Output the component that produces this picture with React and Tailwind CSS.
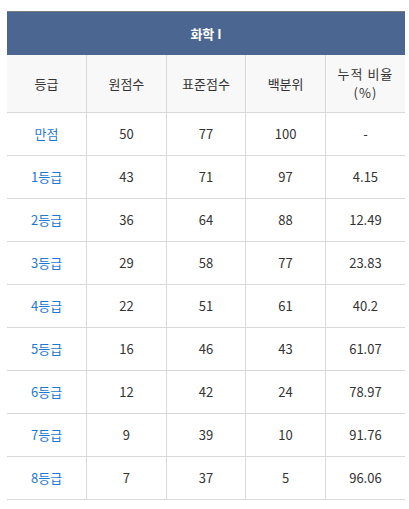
import React from "react";

const rows = [
  { grade: "만점", raw: "50", std: "77", pct: "100", cum: "-" },
  { grade: "1등급", raw: "43", std: "71", pct: "97", cum: "4.15" },
  { grade: "2등급", raw: "36", std: "64", pct: "88", cum: "12.49" },
  { grade: "3등급", raw: "29", std: "58", pct: "77", cum: "23.83" },
  { grade: "4등급", raw: "22", std: "51", pct: "61", cum: "40.2" },
  { grade: "5등급", raw: "16", std: "46", pct: "43", cum: "61.07" },
  { grade: "6등급", raw: "12", std: "42", pct: "24", cum: "78.97" },
  { grade: "7등급", raw: "9", std: "39", pct: "10", cum: "91.76" },
  { grade: "8등급", raw: "7", std: "37", pct: "5", cum: "96.06" },
];

const cell = "border-b border-r border-[#d9d9d9] last:border-r-0 text-center align-middle";

const App = () => {
  return (
    <div
      className="min-h-screen bg-white pl-[7px] pt-[11px] text-[13px] text-[#333]"
      style={{ fontFamily: '"Noto Sans CJK KR", "Noto Sans", sans-serif' }}
    >
      <table className="w-[398px] table-fixed border-collapse">
        <thead>
          <tr>
            <th
              colSpan={5}
              className="h-[43px] border-t border-[#7a7a7a] bg-[#4b6690] text-[13px] font-bold text-white"
            >
              화학 I
            </th>
          </tr>
          <tr className="h-[58px] bg-[#f8f8f8]">
            <th className={`${cell} font-normal`}>등급</th>
            <th className={`${cell} font-normal`}>원점수</th>
            <th className={`${cell} font-normal`}>표준점수</th>
            <th className={`${cell} font-normal`}>백분위</th>
            <th className={`${cell} font-normal leading-[19px] tracking-[1px]`}>
              누적 비율
              <br />
              (%)
            </th>
          </tr>
        </thead>
        <tbody>
          {rows.map((r) => (
            <tr key={r.grade} className="h-[43px]">
              <td className={`${cell} text-[#1f78d1]`}>{r.grade}</td>
              <td className={cell}>{r.raw}</td>
              <td className={cell}>{r.std}</td>
              <td className={cell}>{r.pct}</td>
              <td className={cell}>{r.cum}</td>
            </tr>
          ))}
        </tbody>
      </table>
    </div>
  );
};

export default App;
